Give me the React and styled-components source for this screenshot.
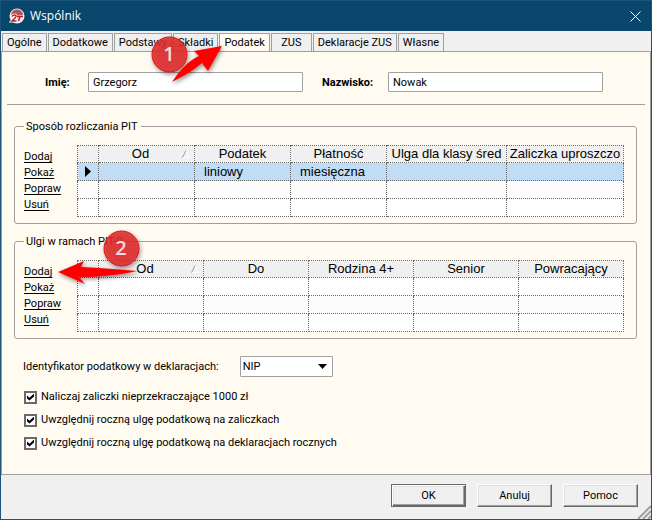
import React, { useState } from "react";
import styled, { createGlobalStyle } from "styled-components";

const GlobalStyle = createGlobalStyle`
  * {
    box-sizing: border-box;
  }
  body {
    margin: 0;
    color: #000;
    font-family: Roboto, Tahoma, sans-serif;
    font-size: 11px;
    line-height: 16px;
  }
  button, input, select {
    font: inherit;
    color: inherit;
  }
`;

const Window = styled.div`
  position: relative;
  display: flex;
  flex-direction: column;
  min-height: 100vh;
  border: 1px solid #1b5479;
  background: #f0f0f0;
`;

const TitleBar = styled.header`
  display: flex;
  align-items: center;
  gap: 5px;
  height: 30px;
  padding: 0 7px 0 8px;
  background: #08476b;
  color: #fff;
`;

const Title = styled.h1`
  flex: 1;
  margin: 0;
  font-family: "Open Sans", sans-serif;
  font-size: 12px;
  font-weight: 400;
`;

const CloseButton = styled.button`
  display: flex;
  padding: 3px;
  border: 0;
  background: none;
  color: #fff;
`;

const Tabs = styled.nav`
  display: flex;
  gap: 1px;
  padding: 2px 2px 0 1px;
`;

const Tab = styled.button`
  min-width: 41px;
  height: 19px;
  margin-bottom: -1px;
  padding: 0 4px;
  border: 1px solid #a0a0a0;
  border-bottom-color: ${({ $active }) => ($active ? "#fffbf0" : "#a0a0a0")};
  background: ${({ $active }) => ($active ? "#fffbf0" : "#f0f0f0")};
  line-height: 16px;
  white-space: nowrap;
`;

const Page = styled.main`
  flex: 1;
  border: 1px solid #a0a0a0;
  background: #fffbf0;
`;

const NameRow = styled.div`
  display: grid;
  grid-template-columns: 43px 1fr 85px 1fr;
  align-items: center;
  margin: 0 5px;
  padding: 20px 42px 12px 38px;
  border-bottom: 1px solid #a0a0a0;
`;

const NameLabel = styled.label`
  padding-top: 1px;
  font-weight: 700;

  input + & {
    padding-left: 19px;
  }
`;

const TextInput = styled.input`
  width: 100%;
  min-width: 0;
  height: 20px;
  padding: 0 4px;
  border: 1px solid #a0a0a0;
  border-radius: 1px;
  background: #fff;
`;

const Groups = styled.div`
  display: flex;
  flex-direction: column;
  gap: 10px;
  padding: 14px 13px 0 12px;
`;

const Group = styled.fieldset`
  display: grid;
  grid-template-columns: 53px 1fr;
  align-items: start;
  min-width: 0;
  margin: 0;
  padding: 11px 12px 6px 9px;
  border: 1px solid #a0a0a0;
  border-radius: 3px;
`;

const Legend = styled.legend`
  padding: 1px 4px 0 2px;
  line-height: 14px;
`;

const Links = styled.div`
  display: flex;
  flex-direction: column;
  align-items: flex-start;
  padding-top: 4px;
`;

const Link = styled.a`
  color: #000;
  line-height: 16px;
  text-underline-offset: 2px;
`;

const Grid = styled.table`
  width: 100%;
  table-layout: fixed;
  border-collapse: collapse;
  font-family: "Liberation Sans", Arial, sans-serif;
  font-size: 13px;
  line-height: 16px;
`;

const MarkerCol = styled.col`
  width: 21px;
`;

const Col = styled.col`
  width: ${({ $width }) => $width || "auto"};
`;

const HeadCell = styled.th`
  height: 17px;
  padding: 0;
  border: 1px dotted #696969;
  background: #f0f0f0;
  font-weight: 400;
  white-space: nowrap;
  overflow: hidden;
`;

const SortHead = styled.span`
  display: flex;
  align-items: center;
  justify-content: center;
  padding-right: 4px;

  span {
    flex: 1;
  }
`;

const Row = styled.tr`
  background: ${({ $selected }) => ($selected ? "#c0ddf5" : "#fff")};

  &:nth-child(even) {
    background: #fcfcfc;
  }
`;

const Cell = styled.td`
  height: 18px;
  padding: 0 9px;
  border: 1px dotted #696969;
`;

const MarkerCell = styled(Cell)`
  padding: 0 7px;

  svg {
    display: block;
  }
`;

const Options = styled.div`
  display: flex;
  flex-direction: column;
  gap: 7px;
  padding: 17px 21px 10px;
`;

const SelectRow = styled.div`
  display: flex;
  align-items: center;
  gap: 21px;
  margin-bottom: 5px;
`;

const SelectBox = styled.span`
  display: grid;
  align-items: center;

  > * {
    grid-area: 1 / 1;
  }

  svg {
    justify-self: end;
    margin-right: 6px;
    pointer-events: none;
  }
`;

const Select = styled.select`
  appearance: none;
  width: 93px;
  height: 21px;
  padding: 0 2px;
  border: 1px solid #a0a0a0;
  border-radius: 1px;
  background: #fff;
`;

const CheckLabel = styled.label`
  display: flex;
  align-items: center;
  gap: 4px;
`;

const CheckBox = styled.input`
  appearance: none;
  display: grid;
  place-items: center;
  width: 13px;
  height: 13px;
  margin: 0 0 0 1px;
  border: 2px solid #696969;
  background: #fff;

  &:checked::before {
    content: "";
    width: 7px;
    height: 7px;
    background: #000;
    clip-path: polygon(0 28%, 36% 62%, 100% 0, 100% 42%, 36% 100%, 0 70%);
  }
`;

const Footer = styled.footer`
  display: flex;
  justify-content: flex-end;
  gap: 11px;
  padding: 9px 13px 12px;
`;

const Button = styled.button`
  width: 75px;
  height: 23px;
  padding: 0;
  border: 1px solid;
  border-color: ${({ $primary }) => ($primary ? "#696969" : "#fff #696969 #696969 #fff")};
  background: #f0f0f0;
  box-shadow: ${({ $primary }) =>
    $primary
      ? "inset 1px 1px #fff, inset -1px -1px #696969, inset -2px -2px #a0a0a0, inset 2px 2px #e3e3e3"
      : "inset -1px -1px #a0a0a0, inset 1px 1px #e3e3e3"};
`;

const SizeGrip = styled.svg`
  position: absolute;
  right: 0;
  bottom: 0;
`;

const Callouts = styled.svg`
  position: absolute;
  top: -1px;
  left: -1px;
  pointer-events: none;
  font-family: "Open Sans", sans-serif;
`;

const TABS = ["Ogólne", "Dodatkowe", "Podstawy", "Składki", "Podatek", "ZUS", "Deklaracje ZUS", "Własne"];

const ACTIONS = ["Dodaj", "Pokaż", "Popraw", "Usuń"];

const SETTLEMENTS = {
  title: "Sposób rozliczania PIT",
  columns: [
    { name: "Od", width: "96px" },
    { name: "Podatek", width: "96px" },
    { name: "Płatność", width: "96px" },
    { name: "Ulga dla klasy śred", width: "120px" },
    { name: "Zaliczka uproszczo" },
  ],
  rows: [["", "liniowy", "miesięczna", "", ""], [], []],
  selected: 0,
};

const RELIEFS = {
  title: "Ulgi w ramach PIT-0",
  columns: [{ name: "Od" }, { name: "Do" }, { name: "Rodzina 4+" }, { name: "Senior" }, { name: "Powracający" }],
  rows: [[], [], []],
};

const CHECKS = [
  "Naliczaj zaliczki nieprzekraczające 1000 zł",
  "Uwzględnij roczną ulgę podatkową na zaliczkach",
  "Uwzględnij roczną ulgę podatkową na deklaracjach rocznych",
];

const Logo = () => (
  <svg width="16" height="16" viewBox="0 0 16 16">
    <circle cx="8" cy="8" r="7.500" fill="#f1eaea" />
    <path d="M2 8C2 4 4.500 1.500 8 1.500S14 4 14 7z" fill="#b5525a" />
    <path d="M3 8.500C4 6.500 7.500 6.500 7 8.500C6.500 10 4.500 11.500 3 13H7.500" stroke="#fff" strokeWidth="3" fill="none" />
    <path d="M3 8.500C4 6.500 7.500 6.500 7 8.500C6.500 10 4.500 11.500 3 13H7.500" stroke="#b8202c" strokeWidth="1.500" fill="none" />
    <path d="M8 8.500H14M11 8.500L9.500 13" stroke="#b8202c" strokeWidth="1.500" fill="none" />
  </svg>
);

const RecordGroup = ({ title, columns, rows, selected }) => (
  <Group>
    <Legend>{title}</Legend>
    <Links>
      {ACTIONS.map((action) => (
        <Link key={action} href="#">
          {action}
        </Link>
      ))}
    </Links>
    <Grid>
      <colgroup>
        <MarkerCol />
        {columns.map((col) => (
          <Col key={col.name} $width={col.width} />
        ))}
      </colgroup>
      <thead>
        <tr>
          <HeadCell />
          {columns.map((col, i) => (
            <HeadCell key={col.name}>
              {i === 0 ? (
                <SortHead>
                  <span>{col.name}</span>
                  <svg width="8" height="8" viewBox="0 0 8 8">
                    <path d="M4 0.500L7.500 7.500H0.500" stroke="#fff" fill="none" />
                    <path d="M4 0.500L0.500 7.500" stroke="#a0a0a0" fill="none" />
                  </svg>
                </SortHead>
              ) : (
                col.name
              )}
            </HeadCell>
          ))}
        </tr>
      </thead>
      <tbody>
        {rows.map((row, i) => (
          <Row key={i} $selected={i === selected}>
            <MarkerCell>
              {i === selected && (
                <svg width="6" height="11" viewBox="0 0 6 11">
                  <path d="M0 0L6 5.500L0 11z" />
                </svg>
              )}
            </MarkerCell>
            {columns.map((col, c) => (
              <Cell key={col.name}>{row[c]}</Cell>
            ))}
          </Row>
        ))}
      </tbody>
    </Grid>
  </Group>
);

const App = () => {
  const [tab, setTab] = useState("Podatek");

  return (
    <>
      <GlobalStyle />
      <Window>
        <TitleBar>
          <Logo />
          <Title>Wspólnik</Title>
          <CloseButton aria-label="Zamknij">
            <svg width="11" height="11" viewBox="0 0 11 11" stroke="currentColor">
              <path d="M0.500 0.500l10 10M10.500 0.500l-10 10" />
            </svg>
          </CloseButton>
        </TitleBar>

        <Tabs>
          {TABS.map((name) => (
            <Tab key={name} $active={name === tab} onClick={() => setTab(name)}>
              {name}
            </Tab>
          ))}
        </Tabs>

        <Page>
          <NameRow>
            <NameLabel htmlFor="first">Imię:</NameLabel>
            <TextInput id="first" defaultValue="Grzegorz" />
            <NameLabel htmlFor="last">Nazwisko:</NameLabel>
            <TextInput id="last" defaultValue="Nowak" />
          </NameRow>

          <Groups>
            <RecordGroup {...SETTLEMENTS} />
            <RecordGroup {...RELIEFS} />
          </Groups>

          <Options>
            <SelectRow>
              <label htmlFor="taxId">Identyfikator podatkowy w deklaracjach:</label>
              <SelectBox>
                <Select id="taxId" defaultValue="NIP">
                  <option>NIP</option>
                  <option>PESEL</option>
                </Select>
                <svg width="9" height="5" viewBox="0 0 9 5">
                  <path d="M0 0h9L4.500 5z" />
                </svg>
              </SelectBox>
            </SelectRow>
            {CHECKS.map((text) => (
              <CheckLabel key={text}>
                <CheckBox type="checkbox" defaultChecked />
                {text}
              </CheckLabel>
            ))}
          </Options>
        </Page>

        <Footer>
          <Button $primary>OK</Button>
          <Button>Anuluj</Button>
          <Button>Pomoc</Button>
        </Footer>

        <SizeGrip width="14" height="14" viewBox="0 0 14 14" stroke="#a0a0a0" strokeWidth="2">
          <path d="M1 14L14 1M6 14L14 6M11 14L14 11" />
        </SizeGrip>

        <Callouts width="240" height="300" viewBox="0 0 240 300">
          <defs>
            <filter id="shadow" x="-30%" y="-30%" width="160%" height="160%">
              <feDropShadow dx="1" dy="2" stdDeviation="2" floodOpacity="0.45" />
            </filter>
          </defs>
          <g filter="url(#shadow)" fill="#e0282c" fillOpacity="0.85" stroke="#d81a1e">
            <circle cx="169.500" cy="54.500" r="17.500" />
            <circle cx="121.500" cy="248.500" r="17.500" />
          </g>
          <g fill="#f4dcdc" fontSize="20" fontWeight="600" textAnchor="middle">
            <text x="169" y="61">1</text>
            <text x="121" y="255">2</text>
          </g>
          <g filter="url(#shadow)" fill="#fe0000">
            <path d="M222 46L194 51L199 56C188 61 180 70 172 82C184 76 194 70 202 63L208 71z" />
            <path d="M58 272L84 261L81 267C100 268 119 269 137 271C119 275 100 277 79 277L85 284z" />
          </g>
        </Callouts>
      </Window>
    </>
  );
};

export default App;
